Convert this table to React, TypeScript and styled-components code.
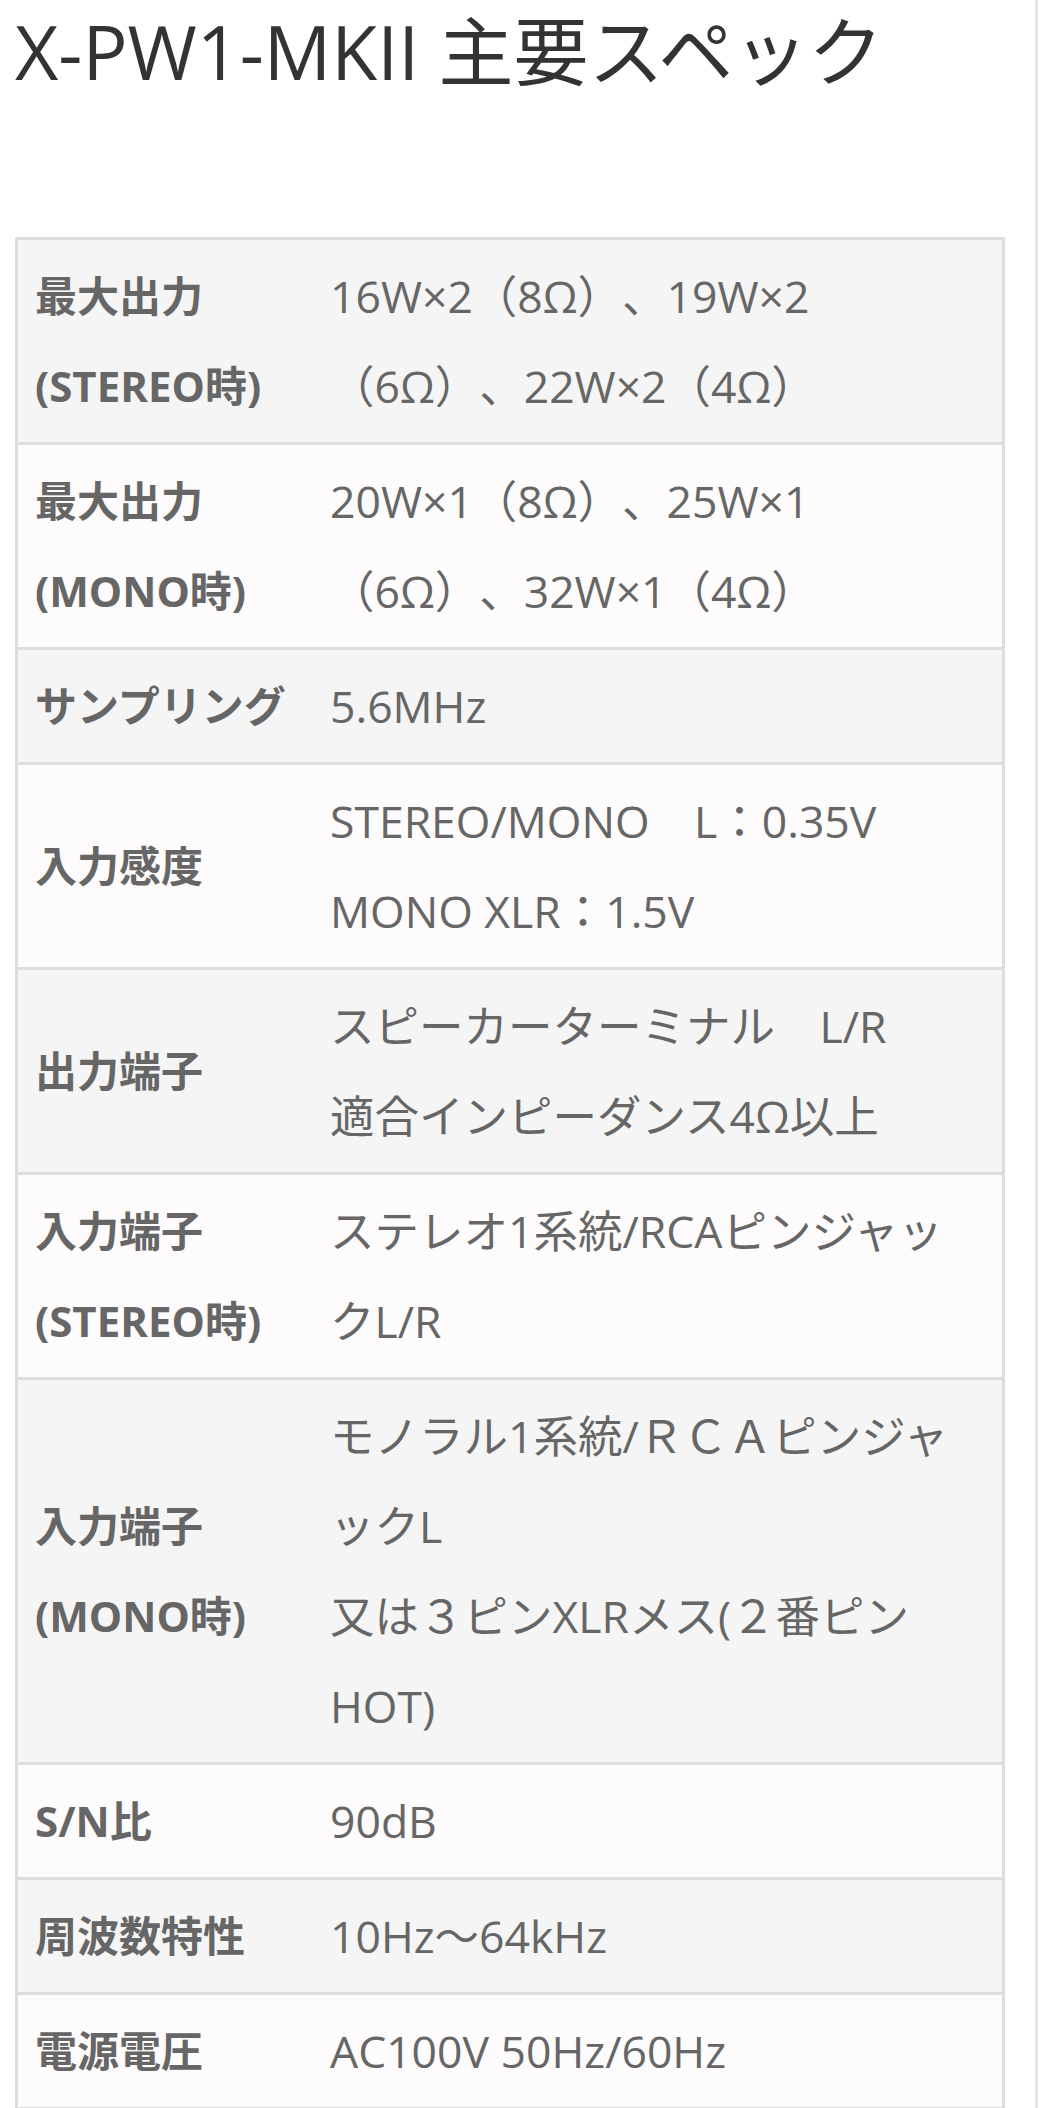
import React from 'react'
import styled, { createGlobalStyle } from 'styled-components'

type Spec = { label: string[]; value: string[] }

const specs: Spec[] = [
  { label: ['最大出力', '(STEREO時)'], value: ['16W×2（8Ω）、19W×2', '（6Ω）、22W×2（4Ω）'] },
  { label: ['最大出力', '(MONO時)'], value: ['20W×1（8Ω）、25W×1', '（6Ω）、32W×1（4Ω）'] },
  { label: ['サンプリング'], value: ['5.6MHz'] },
  { label: ['入力感度'], value: ['STEREO/MONO　L：0.35V', 'MONO XLR：1.5V'] },
  { label: ['出力端子'], value: ['スピーカーターミナル　L/R', '適合インピーダンス4Ω以上'] },
  { label: ['入力端子', '(STEREO時)'], value: ['ステレオ1系統/RCAピンジャッ', 'クL/R'] },
  {
    label: ['入力端子', '(MONO時)'],
    value: ['モノラル1系統/ＲＣＡピンジャ', 'ックL', '又は３ピンXLRメス(２番ピン', 'HOT)'],
  },
  { label: ['S/N比'], value: ['90dB'] },
  { label: ['周波数特性'], value: ['10Hz〜64kHz'] },
  { label: ['電源電圧'], value: ['AC100V 50Hz/60Hz'] },
]

const lines = (arr: string[]) =>
  arr.map((l, i) => (
    <React.Fragment key={i}>
      {i > 0 && <br />}
      {l}
    </React.Fragment>
  ))

const App = () => {
  return (
    <>
      <GlobalStyle />
      <Page>
        <Heading>X-PW1-MKII 主要スペック</Heading>
        <SpecTable>
          {specs.map((s, i) => (
            <Row key={i} $odd={i % 2 === 0}>
              <Label>{lines(s.label)}</Label>
              <Value>{lines(s.value)}</Value>
            </Row>
          ))}
        </SpecTable>
      </Page>
    </>
  )
}

export default App

const GlobalStyle = createGlobalStyle`
  html, body {
    margin: 0;
    padding: 0;
    background: #ffffff;
  }
  body {
    font-family: "Open Sans", "Noto Sans CJK JP", sans-serif;
    text-spacing-trim: space-all;
  }
`

const Page = styled.div`
  width: 1020px;
  min-height: 2108px;
  padding-left: 15px;
  border-right: 3px solid #e6e6e6;
  box-sizing: content-box;
  overflow: hidden;
`

const Heading = styled.h1`
  margin: 6px 0 140px;
  font-size: 75px;
  line-height: 91px;
  font-weight: 400;
  color: #333333;
  white-space: nowrap;
`

const SpecTable = styled.div`
  width: 990px;
  box-sizing: border-box;
  border: 3px solid #dddddd;
  border-bottom: none;
`

const Row = styled.div<{ $odd: boolean }>`
  display: grid;
  grid-template-columns: 300px 1fr;
  align-items: center;
  background: ${p => (p.$odd ? '#f5f5f5' : '#fdfbfb')};
  border-bottom: 3px solid #dddddd;
  line-height: 90px;
  color: #666666;
`

const Label = styled.div`
  padding: 11px 12px 11px 17px;
  font-size: 42px;
  font-weight: 700;
  white-space: nowrap;
`

const Value = styled.div`
  padding: 11px 12px;
  font-size: 44.5px;
  white-space: nowrap;
`
